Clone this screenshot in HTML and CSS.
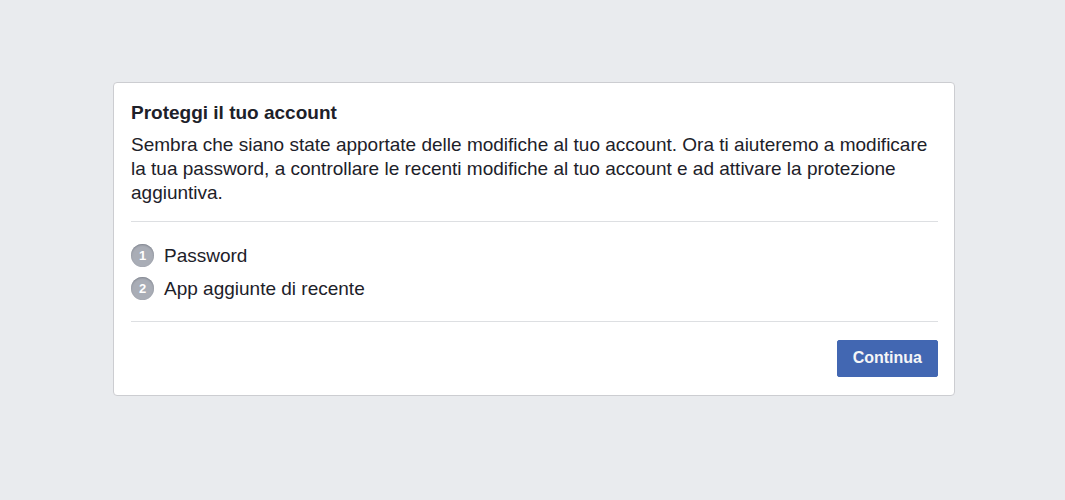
FILE: index.html
```html
<!DOCTYPE html>
<html lang="it">
<head>
<meta charset="utf-8">
<meta name="viewport" content="width=device-width, initial-scale=1">
<title>Proteggi il tuo account</title>
<link rel="stylesheet" href="styles.css">
</head>
<body>
<main class="card">
  <header class="intro">
    <h1 class="title">Proteggi il tuo account</h1>
    <p class="text">Sembra che siano state apportate delle modifiche al tuo account. Ora ti aiuteremo a modificare la tua password, a controllare le recenti modifiche al tuo account e ad attivare la protezione aggiuntiva.</p>
  </header>
  <ol class="steps">
    <li class="step"><span class="badge">1</span><span>Password</span></li>
    <li class="step"><span class="badge">2</span><span>App aggiunte di recente</span></li>
  </ol>
  <footer class="actions">
    <button class="continue" type="button">Continua</button>
  </footer>
</main>
</body>
</html>
```
FILE: styles.css
```css
* {
  box-sizing: border-box;
}

body {
  margin: 0;
  padding: 82px 110px 40px 113px;
  background: #e9ebee;
  color: #1d2129;
  font-family: "Liberation Sans", Arial, sans-serif;
  font-size: 19px;
  line-height: 24px;
}

.card {
  padding: 18px 16px 18px 17px;
  background: #fff;
  border: 1px solid #cccdd1;
  border-radius: 4px;
}

.intro {
  padding-bottom: 16px;
  border-bottom: 1px solid #dddfe2;
}

.title {
  margin: 0 0 8px;
  font-size: 19px;
  line-height: 24px;
}

.text {
  margin: 0;
}

.steps {
  display: grid;
  gap: 9px;
  margin: 0;
  padding: 22px 0 20px;
  list-style: none;
  border-bottom: 1px solid #dddfe2;
}

.step {
  display: flex;
  align-items: flex-start;
  gap: 10px;
}

.badge {
  width: 23px;
  height: 23px;
  border-radius: 50%;
  background: #a9adb6;
  box-shadow: inset 0 1px 2px #80858f;
  color: #fff;
  font-size: 13px;
  font-weight: bold;
  line-height: 24px;
  text-align: center;
}

.actions {
  display: flex;
  justify-content: flex-end;
  padding-top: 18px;
}

.continue {
  height: 37px;
  padding: 0 15px 2px;
  border: 1px solid #4267b2;
  border-radius: 2px;
  background: #4267b2;
  color: #f5f6f7;
  font-family: inherit;
  font-size: 16px;
  font-weight: bold;
}
```
